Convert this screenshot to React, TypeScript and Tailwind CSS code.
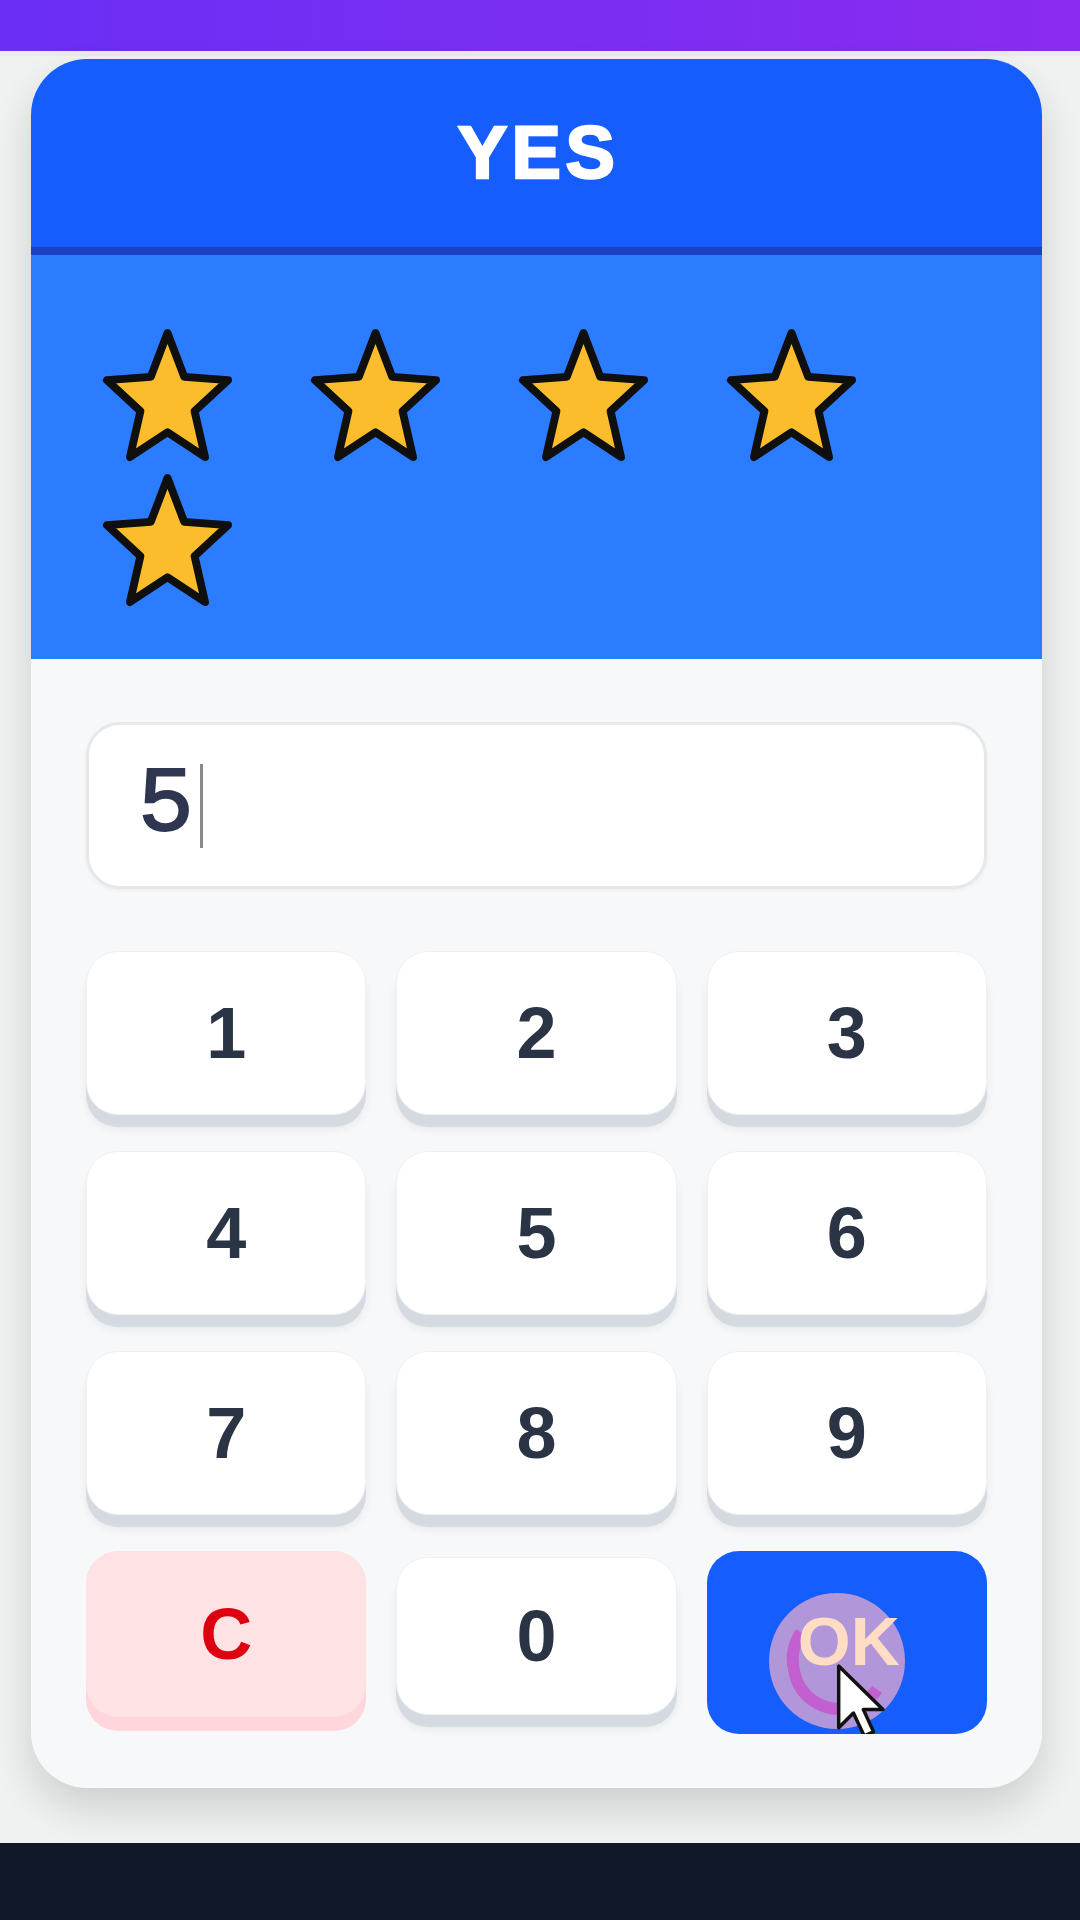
import React from "react";

function Star() {
  return (
    <svg width="131" height="134" viewBox="-1 -1 133 136" className="shrink-0">
      <polygon
        points="65.5,4 82.5,48.6 127,51.9 93,83.4 103.6,130 65.5,104.9 27.4,130 38,83.4 4,51.9 48.5,48.6"
        fill="#fbbd2b"
        stroke="#0f0f0f"
        strokeWidth="8"
        strokeLinejoin="round"
      />
    </svg>
  );
}

function Key({ label }: { label: string }) {
  return (
    <div className="h-[164px] rounded-[32px] bg-white border border-[#eef0f3] shadow-[0_12px_0_#d5dae1,0_14px_10px_rgba(0,0,0,0.07)] flex items-center justify-center">
      <span className="text-[72px] font-bold leading-none text-[#2b3445]">{label}</span>
    </div>
  );
}

export default function App() {
  const keys = ["1", "2", "3", "4", "5", "6", "7", "8", "9"];
  return (
    <div
      className="w-[1080px] h-[1920px] flex flex-col overflow-hidden bg-[#f0f1f1]"
      style={{ fontFamily: '"Liberation Sans", Arial, sans-serif' }}
    >
      <div className="h-[51px] shrink-0 bg-gradient-to-r from-[#6a2ef5] to-[#8a2bf0]" />
      <div className="h-[5px] shrink-0 bg-[#ece8f4]" />
      <div className="flex-1 pl-[31px] pt-[3px]">
        <div className="w-[1011px] rounded-[56px] overflow-hidden bg-[#f6f8fa] shadow-[0_20px_40px_rgba(0,0,0,0.14)]">
          <div className="h-[196px] bg-[#155dfc] border-b-[8px] border-[#1c3fc4] flex items-center justify-center">
            <span className="text-[74px] font-bold leading-none text-white tracking-[0.06em] [-webkit-text-stroke:2.5px_white] pl-[4px]">
              YES
            </span>
          </div>
          <div className="bg-[#2b7cff] pt-[73px] pb-[52px] pl-[71px] pr-[40px] flex flex-wrap gap-x-[77px] gap-y-[11px]">
            <Star />
            <Star />
            <Star />
            <Star />
            <Star />
          </div>
          <div className="px-[55px] pt-[63px] pb-[73px]">
            <div className="h-[167px] rounded-[34px] bg-white border-[3px] border-[#e6e8eb] shadow-[0_2px_4px_rgba(0,0,0,0.04)] flex items-center pl-[49px]">
              <span
                className="text-[93px] leading-none text-[#2f3650] [-webkit-text-stroke:2px_#2f3650]"
                style={{ fontFamily: '"Liberation Mono", "Courier New", monospace' }}
              >
                5
              </span>
              <span className="ml-[6px] w-[3px] h-[84px] bg-[#8a8a8a]" />
            </div>
            <div className="mt-[62px] grid grid-cols-3 gap-x-[30px] gap-y-[36px] auto-rows-[164px]">
              {keys.map((k) => (
                <Key key={k} label={k} />
              ))}
              <div className="h-[166px] rounded-[32px] bg-[#ffe2e4] border border-[#ffe0e3] shadow-[0_14px_0_#ffd6db] flex items-center justify-center">
                <span className="text-[72px] font-bold leading-none text-[#dc0010]">C</span>
              </div>
              <div className="h-[158px] mt-[6px] rounded-[32px] bg-white border border-[#eef0f3] shadow-[0_12px_0_#d5dae1,0_14px_10px_rgba(0,0,0,0.07)] flex items-center justify-center">
                <span className="text-[72px] font-bold leading-none text-[#2b3445]">0</span>
              </div>
              <div className="relative h-[183px] rounded-[32px] bg-[#155dfc] overflow-hidden">
                <div className="absolute left-[62px] top-[42px] w-[136px] h-[136px] rounded-full bg-[rgba(232,170,205,0.74)]" />
                <div className="absolute left-[80px] top-[56px] w-[104px] h-[108px] rounded-full border-[12px] border-[rgba(205,60,200,0.6)] border-t-transparent border-r-transparent rotate-[-10deg]" />
                <div className="absolute inset-0 flex justify-center pt-[56px] pl-[4px]">
                  <span className="text-[68px] font-bold leading-none text-[#ffdcc4]">OK</span>
                </div>
                <svg
                  className="absolute left-[129px] top-[112px]"
                  width="51"
                  height="76"
                  viewBox="-1 -1 19 28"
                >
                  <path
                    d="M0 0 L0 23 L5.5 17.5 L9.5 26 L13 24.5 L9.2 16.2 L16.5 16.2 Z"
                    fill="white"
                    stroke="#111"
                    strokeWidth="1.3"
                    strokeLinejoin="round"
                  />
                </svg>
              </div>
            </div>
          </div>
        </div>
      </div>
      <div className="h-[77px] shrink-0 bg-[#111827]" />
    </div>
  );
}
